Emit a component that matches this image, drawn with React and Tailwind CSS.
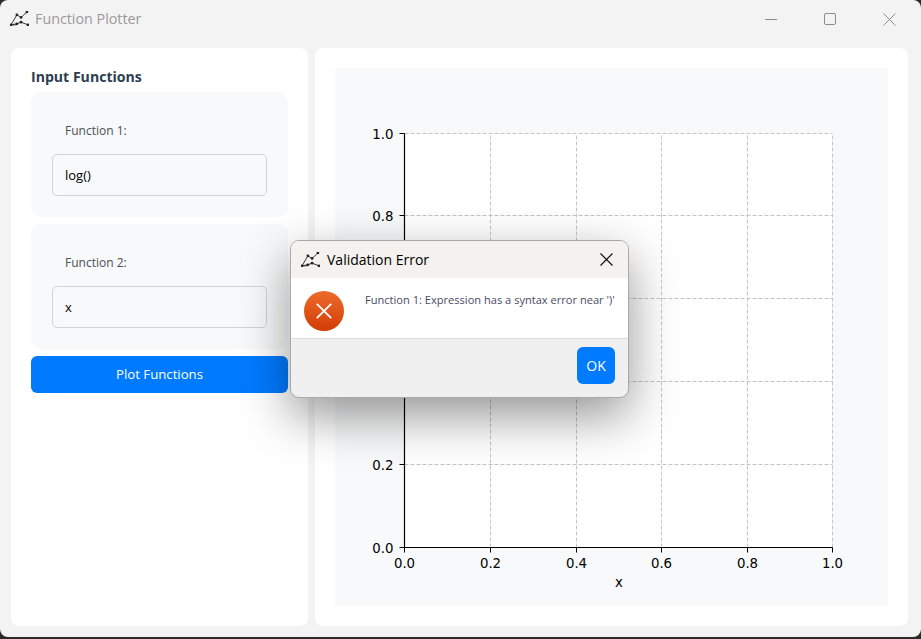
import React from "react";

// Tick positions in chart pixels, read off the plot
const xTicks = [69.5, 155.5, 241.5, 326.5, 412.5, 497.5];
const yTicks = [479.5, 396.5, 313.5, 230.5, 147.5, 65.5];
const labels = ["0.0", "0.2", "0.4", "0.6", "0.8", "1.0"];
const X0 = xTicks[0];
const X1 = xTicks[5];
const Y0 = yTicks[0];
const Y1 = yTicks[5];

// Small chart glyph shared by the window and the dialog title bars
const AppIcon = ({ className }) => (
	<svg viewBox="0 0 18 14" className={className} fill="none" stroke="#333" strokeWidth="0.9">
		<path d="M1 13 L6.5 3.5 L10.5 6 L16 0.8" />
		<path d="M1 13 L6.5 12 L10.5 10.5 L17 13 M1 13 H6" />
		{[[1, 13], [6.5, 3.5], [10.5, 6], [16, 0.8], [6.5, 12], [10.5, 10.5], [17, 13]].map(([cx, cy]) => (
			<circle key={`${cx}-${cy}`} cx={cx} cy={cy} r="1.3" fill="#222" stroke="none" />
		))}
	</svg>
);

const Chart = () => (
	<svg viewBox="0 0 553 538" className="block w-full h-full" style={{ fontFamily: "'DejaVu Sans', sans-serif" }}>
		<rect x={X0} y={Y1} width={X1 - X0} height={Y0 - Y1} fill="#fff" />
		{labels.slice(1).map((l, i) => (
			<g key={l} stroke="#c4c4c4" strokeWidth="1" strokeDasharray="4 2">
				<line x1={xTicks[i + 1]} y1={Y0} x2={xTicks[i + 1]} y2={Y1} />
				<line x1={X0} y1={yTicks[i + 1]} x2={X1} y2={yTicks[i + 1]} />
			</g>
		))}
		<line x1={X0} y1={Y1} x2={X0} y2={Y0 + 0.5} stroke="#000" strokeWidth="1.2" />
		<line x1={X0} y1={Y0} x2={X1} y2={Y0} stroke="#000" strokeWidth="1.2" />
		{labels.map((l, i) => (
			<g key={l}>
				<line x1={xTicks[i]} y1={Y0} x2={xTicks[i]} y2={Y0 + 5} stroke="#000" strokeWidth="1" />
				<line x1={X0 - 5} y1={yTicks[i]} x2={X0} y2={yTicks[i]} stroke="#000" strokeWidth="1" />
				<text x={xTicks[i]} y={Y0 + 20} fontSize="13.3" textAnchor="middle" fill="#000">{l}</text>
				<text x={X0 - 11} y={yTicks[i] + 5} fontSize="13.3" textAnchor="end" fill="#000">{l}</text>
			</g>
		))}
		<text x="284" y="519" fontSize="13.3" textAnchor="middle" fill="#000">x</text>
	</svg>
);

const FunctionCard = ({ label, value }) => (
	<div className="h-[125px] rounded-[10px] bg-[#f8f9fa] px-[21px] pt-[29px]">
		<div className="pl-[13px] h-[20px] leading-[20px] text-[12px] text-[#495057]">{label}</div>
		<div className="mt-[13px] h-[42px] rounded-[5px] border border-[#ced4da] bg-[#f8f9fa] pl-[12px] leading-[41px] text-[13px] text-black">
			{value}
		</div>
	</div>
);

export default function App() {
	return (
		<div className="relative w-[921px] h-[639px] overflow-hidden bg-[#2a2a2a]" style={{ fontFamily: "'Open Sans', 'Noto Sans', sans-serif" }}>
			<div className="h-[637px] rounded-[8px] bg-[#f3f3f3] flex flex-col">
				{/* Title bar */}
				<div className="h-[37px] flex items-center shrink-0 pl-[10px]">
					<AppIcon className="w-[19px] h-[15px]" />
					<span className="ml-[6px] text-[14.3px] text-[#9a9a9a]">Function Plotter</span>
					<div className="ml-auto flex items-center gap-[47px] pr-[25px] pt-[1px]">
						<svg width="12" height="12" viewBox="0 0 12 12" stroke="#8c8c8c" fill="none"><line x1="0" y1="6.5" x2="12" y2="6.5" /></svg>
						<svg width="12" height="12" viewBox="0 0 12 12" stroke="#8c8c8c" fill="none"><rect x="0.5" y="0.5" width="11" height="11" rx="1.5" /></svg>
						<svg width="13" height="13" viewBox="0 0 13 13" stroke="#8c8c8c" fill="none"><path d="M0.5 0.5 L12.5 12.5 M12.5 0.5 L0.5 12.5" /></svg>
					</div>
				</div>

				{/* Panels */}
				<div className="flex-1 flex gap-[7px] pl-[11px] pr-[13px] pt-[11px] pb-[11px]">
					<div className="w-[297px] rounded-[8px] bg-white px-[20px] pt-[20px]">
						<div className="h-[24px] leading-[18px] text-[14.1px] font-bold text-[#2c3e50]">Input Functions</div>
						<div className="flex flex-col gap-[7px]">
							<FunctionCard label="Function 1:" value="log()" />
							<FunctionCard label="Function 2:" value="x" />
							<button className="h-[37px] rounded-[6px] bg-[#007bff] pt-[1px] text-[13.2px] text-white">Plot Functions</button>
						</div>
					</div>
					<div className="flex-1 rounded-[8px] bg-white p-[20px]">
						<div className="h-full bg-[#f8f9fa]">
							<Chart />
						</div>
					</div>
				</div>
			</div>

			{/* Dialog */}
			<div className="absolute left-[290px] top-[240px] w-[339px] h-[158px] rounded-[9px] border border-[#a9a9a9] overflow-hidden flex flex-col shadow-[0_18px_50px_rgba(0,0,0,0.42)] bg-[#f0f0f0]">
				<div className="h-[37px] bg-[#f4f1ee] flex items-center pl-[10px] pr-[15px] shrink-0">
					<AppIcon className="w-[19px] h-[15px]" />
					<span className="ml-[7px] text-[14px] text-black">Validation Error</span>
					<svg className="ml-auto" width="13" height="13" viewBox="0 0 13 13" stroke="#111" strokeWidth="1.2" fill="none"><path d="M0.5 0.5 L12.5 12.5 M12.5 0.5 L0.5 12.5" /></svg>
				</div>
				<div className="h-[61px] bg-white border-b border-[#dcdcdc] flex shrink-0 pl-[13px] pt-[13px]">
					<div className="w-[40px] h-[40px] rounded-full bg-gradient-to-b from-[#ee6a2a] to-[#d23c02] flex items-center justify-center">
						<svg width="16" height="16" viewBox="0 0 16 16" stroke="#fff" strokeWidth="1.8" fill="none"><path d="M0.8 0.8 L15.2 15.2 M15.2 0.8 L0.8 15.2" /></svg>
					</div>
					<span className="ml-[21px] -mt-[1px] text-[11.08px] leading-[20px] text-[#4a4a64] whitespace-nowrap">Function 1: Expression has a syntax error near ')'</span>
				</div>
				<div className="flex-1 flex justify-end items-start pt-[8px] pr-[13px]">
					<button className="w-[38px] h-[37px] rounded-[6px] bg-[#007bff] text-[14px] text-white">OK</button>
				</div>
			</div>
		</div>
	);
}
